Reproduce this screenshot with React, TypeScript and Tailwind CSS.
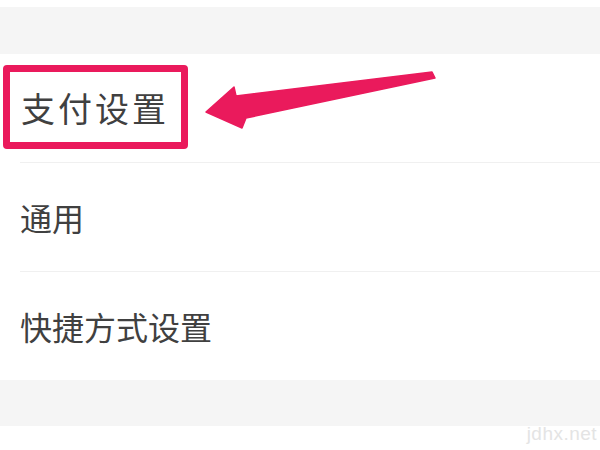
import React from 'react'

const ROWS = ['支付设置', '通用', '快捷方式设置']

export default function App() {
  return (
    <div
      className="relative w-[600px] h-[450px] overflow-hidden bg-white"
      style={{ fontFamily: '"Noto Sans CJK SC", "Noto Sans", sans-serif' }}
    >
      <div className="h-[7px] bg-white" />
      <div className="h-[47px] bg-[#f5f5f5]" />

      {/* settings list */}
      <div className="flex flex-col bg-white">
        {ROWS.map((label, i) => (
          <div key={label} className="flex flex-col">
            <div
              className={
                i === 0
                  ? 'h-[108px] flex items-center pl-[21px] text-[34px] tracking-[3px] text-[#404040] leading-none'
                  : 'h-[108px] flex items-center pl-[20px] text-[32px] text-[#404040] leading-none'
              }
            >
              {label}
            </div>
            {i < ROWS.length - 1 && <div className="ml-[20px] h-px bg-[#f0f0f0]" />}
          </div>
        ))}
      </div>

      <div className="h-[46px] bg-[#f5f5f5]" />

      <div className="absolute right-[3px] bottom-[2px] text-[19px] tracking-wide text-[#e4e4e4]"
           style={{ fontFamily: '"Liberation Sans", sans-serif' }}>
        jdhx.net
      </div>

      {/* annotation: highlight box */}
      <div className="absolute left-[3px] top-[65px] w-[185px] h-[84px] border-[7px] border-[#ea1a5c] rounded-[4px]" />

      {/* annotation: arrow */}
      <svg className="absolute left-0 top-0" width="600" height="450" viewBox="0 0 600 450">
        <path
          d="M206 112 L234 87 L236 96 L432 72 L435 78 L246 118 L242 128 Z"
          fill="#ea1a5c"
          stroke="#ea1a5c"
          strokeWidth="1.5"
          strokeLinejoin="round"
        />
      </svg>
    </div>
  )
}
